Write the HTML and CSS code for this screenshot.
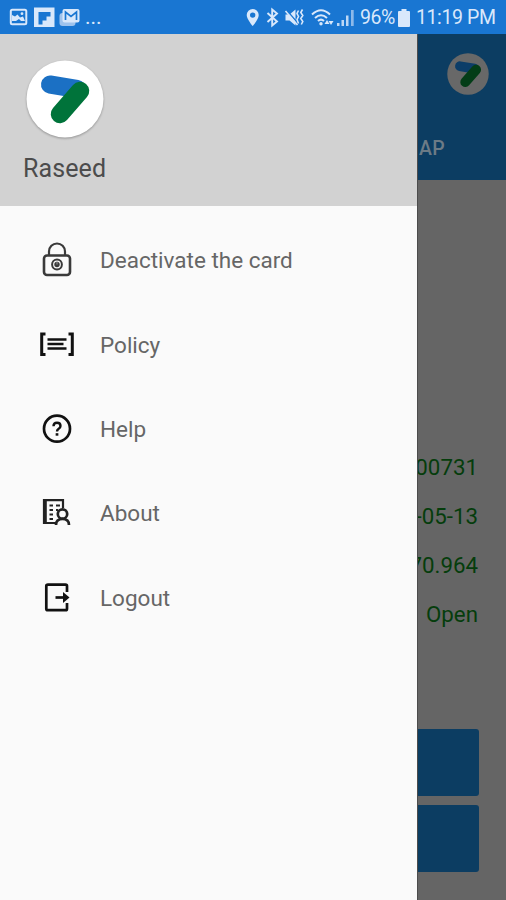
FILE: index.html
```html
<!DOCTYPE html>
<html lang="en">
<head>
<meta charset="utf-8">
<title>Raseed</title>
<link rel="stylesheet" href="styles.css">
</head>
<body>
<div class="screen">
  <header class="status">
    <svg class="notices" width="72" height="34" viewBox="9 0 72 34">
      <rect x="10.8" y="9.8" width="15.5" height="14.5" rx="1.5" fill="none" stroke="#d9e8fb" stroke-width="2"/>
      <path d="M12 21v-6l3 1.500 2.500-2 2.500 3 3-1 2 4.500h-4l-2-2-3 2z" fill="#d9e8fb"/><circle cx="22" cy="13.700" r="1.400" fill="#d9e8fb"/>
      <path d="M34 7.500h20.500v19.500H34z" fill="#d9e8fb"/><path d="M38.500 12h12v4.500h-4v4h-4v4h-4z" fill="#1976d2"/>
      <rect x="59.500" y="13" width="16" height="13" rx="3" fill="#9fc3ed"/>
      <rect x="62.500" y="9" width="17" height="13.500" rx="2" fill="#d9e8fb"/>
      <path d="M65.500 20v-8l5.500 4.500 5.500-4.500v8" fill="none" stroke="#1976d2" stroke-width="1.700"/>
    </svg>
    <span class="dots">...</span>
    <svg class="signals" width="110" height="34" viewBox="246 0 110 34">
      <path fill="#d9e8fb" fill-rule="evenodd" d="M252.700 9a6 6 0 0 0-6 6c0 4.300 6 11 6 11s6-6.700 6-11a6 6 0 0 0-6-6zm0 3.400a2.700 2.700 0 1 1 0 5.400 2.700 2.700 0 0 1 0-5.400z"/>
      <path d="M267.500 13l9.500 8.500-4.800 4v-16l4.800 4-9.500 8.500" fill="none" stroke="#d9e8fb" stroke-width="1.900"/>
      <path d="M285.500 14.500h4l6-5v16l-6-5h-4z" fill="#d9e8fb"/>
      <path d="M286.500 10l12 14" stroke="#1976d2" stroke-width="1.500"/><path d="M285.500 11l12 14" stroke="#d9e8fb" stroke-width="1.600"/>
      <path d="M298.500 10.500l-1.500 3 1.500 3-1.500 3 1.500 4M302.500 9.500l-1.700 3 2 3-2 3 2 3-1.500 3" fill="none" stroke="#d9e8fb" stroke-width="1.600"/>
      <g fill="none" stroke="#d9e8fb" stroke-width="2"><path d="M312 14.500q9-8.500 18 0M315 18q6-5.500 12 0M318 21q3-2.800 6 0"/></g>
      <circle cx="321" cy="23.700" r="1.700" fill="#d9e8fb"/>
      <path d="M324.500 24l2.500-4 2.500 4zM328.500 21l2.500 4 2.500-4z" fill="#d9e8fb"/>
      <g fill="#bdd7f5"><path d="M337 23h2.500v3H337zM341.500 20h2.500v6h-2.500zM346 15.500h2.500V26H346z"/><path d="M351 10h2.700v16H351z" fill="#8db9ea"/></g>
    </svg>
    <span class="percent">96%</span>
    <svg class="battery" width="12" height="18" viewBox="0 0 12 18"><path d="M3.500 0h5v2H11q1 0 1 1v14q0 1-1 1H1q-1 0-1-1V3q0-1 1-1h2.500z" fill="#d9e8fb"/></svg>
    <span class="clock">11:19 PM</span>
  </header>

  <main class="body">
    <nav class="drawer">
      <div class="profile">
        <svg class="avatar" width="78" height="78" viewBox="0 0 78 78">
          <circle cx="39" cy="39" r="38.500" fill="#fff"/>
          <path d="M24 24.500l27 4.500" stroke="#1b70c4" stroke-width="18" stroke-linecap="round"/>
          <path d="M54 31L34 54" stroke="#00733a" stroke-width="18.500" stroke-linecap="round"/>
        </svg>
        <span class="name">Raseed</span>
      </div>
      <ul class="menu">
        <li class="item">
          <svg class="icon" viewBox="0 0 36 36" fill="none" stroke="#3a3a3a">
            <rect x="5" y="13.500" width="26" height="19.500" rx="3" stroke-width="2.600"/>
            <path d="M10 13.500v-4a8 8 0 0 1 16 0v4" stroke-width="2.200"/>
            <circle cx="18" cy="22.500" r="4.900" stroke-width="2"/><circle cx="18" cy="22.500" r="2.700" fill="#3a3a3a" stroke="none"/><path d="M18 22.500v-3" stroke="#999" stroke-width="1"/>
          </svg><span>Deactivate the card</span>
        </li>
        <li class="item">
          <svg class="icon" viewBox="0 0 36 36" fill="none" stroke="#111">
            <path d="M6.500 7H2.700v20.500h3.800M29.500 7h3.800v20.500h-3.800" stroke-width="3"/>
            <path d="M8.500 12.500h19M8.500 17h16M8.500 21.500h19" stroke-width="2.600"/>
          </svg><span>Policy</span>
        </li>
        <li class="item">
          <svg class="icon" viewBox="0 0 36 36" fill="none" stroke="#111">
            <circle cx="18" cy="17.700" r="13" stroke-width="2.700"/>
            <path d="M14.500 15.200q0-3.500 3.500-3.500t3.500 3.200q0 1.800-2.100 3.100-1.400.9-1.400 2.500" stroke-width="2.400"/><path d="M18 22.200v2.500" stroke-width="2.700"/>
          </svg><span>Help</span>
        </li>
        <li class="item">
          <svg class="icon" viewBox="0 0 36 36" fill="none" stroke="#222">
            <path d="M24 13V5.200H5V28h12" stroke-width="2.200"/><path d="M6.800 6v22" stroke-width="2"/>
            <path d="M10.500 10.500h3.500M10.500 15h3.500M10.500 19.500h3.500M10.500 24h3.500M17 10.500h4M17 15h2" stroke-width="2"/>
            <circle cx="23.500" cy="19" r="4.700" stroke-width="2.700"/><path d="M17 30q0-6 6.500-6t6.500 6" stroke-width="2.700"/>
          </svg><span>About</span>
        </li>
        <li class="item">
          <svg class="icon" viewBox="0 0 36 36" fill="none" stroke="#111">
            <path d="M28 12V6Q28 4.700 26.500 4.700H9Q7.300 4.700 7.300 6.200v22.500Q7.300 30.200 9 30.200h17.500q1.500 0 1.500-1.500V23" stroke-width="2.700"/>
            <path d="M16.500 17.500H26" stroke-width="2.700"/><path d="M24 12l6.500 5.500L24 23z" fill="#111" stroke="none"/>
          </svg><span>Logout</span>
        </li>
      </ul>
    </nav>

    <section class="page">
      <div class="appbar">
        <svg class="mini" width="42" height="42" viewBox="0 0 78 78">
          <circle cx="39" cy="39" r="38.500" fill="#686868"/>
          <path d="M24 24.500l27 4.500" stroke="#0c3d68" stroke-width="18" stroke-linecap="round"/>
          <path d="M54 31L34 54" stroke="#033d17" stroke-width="18.500" stroke-linecap="round"/>
        </svg>
        <span class="tab">AP</span>
      </div>
      <div class="values">
        <span>00731</span><span>-05-13</span><span>70.964</span><span>Open</span>
      </div>
      <div class="buttons"><div class="button"></div><div class="button"></div></div>
    </section>
  </main>
</div>
</body>
</html>
```
FILE: styles.css
```css
* { box-sizing: border-box; }
body { margin: 0; font-family: Roboto, "Liberation Sans", sans-serif; }
.screen { width: 506px; height: 900px; display: flex; flex-direction: column; overflow: hidden; background: #fafafa; }

.status { height: 34px; flex: none; display: flex; align-items: center; padding-left: 9px; background: #1976d2; color: #d9e8fb; white-space: nowrap; }
.status svg { flex: none; }
.dots { width: 160px; padding-left: 4px; font-size: 21px; line-height: 34px; }
.signals { margin-left: 5px; }
.percent { width: 38px; padding-left: 4px; font-size: 19.500px; line-height: 34px; letter-spacing: -.4px; }
.battery { margin: 1px 6px 0 4px; }
.battery, .percent, .clock { flex: none; }
.percent, .clock { padding-top: 2px; }
.clock { width: 86px; font-size: 19.500px; line-height: 34px; letter-spacing: -.4px; }

.body { flex: 1; display: grid; grid-template-columns: 417px 89px; min-height: 0; }
.drawer { background: #fafafa; }
.profile { height: 172px; padding: 26px 0 0 23px; background: #d2d2d2; }
.avatar { display: block; margin-left: 3px; filter: drop-shadow(0 1px 1px rgba(0, 0, 0, .3)); }
.name { display: block; margin-top: 16px; font-size: 25px; line-height: 30px; letter-spacing: .1px; color: #4c4c4c; }
.menu { list-style: none; margin: 0; padding: 12px 0 0 39px; }
.item { height: 84.400px; display: flex; align-items: center; gap: 25px; font-size: 22.500px; color: #666; }
.icon { width: 36px; height: 36px; flex: none; }

.page { background: #656565; overflow: hidden; border-left: 1px solid #4c4c4c; }
.appbar { height: 146px; padding: 19px 0 0 1px; background: #0c3d62; }
.mini { display: block; margin-left: 28px; }
.tab { display: block; margin-top: 42px; font-size: 19.500px; font-weight: 500; line-height: 24px; letter-spacing: .2px; color: #6c7b86; }
.values { display: flex; flex-direction: column; align-items: flex-end; margin-top: 262.500px; padding-right: 28px; font-size: 22.300px; line-height: 49.200px; white-space: nowrap; color: #053d0c; }
.buttons { display: flex; flex-direction: column; gap: 9px; margin: 89.500px 27px 0 0; }
.button { height: 67px; background: #0c3d62; border-radius: 0 3px 3px 0; }
```
